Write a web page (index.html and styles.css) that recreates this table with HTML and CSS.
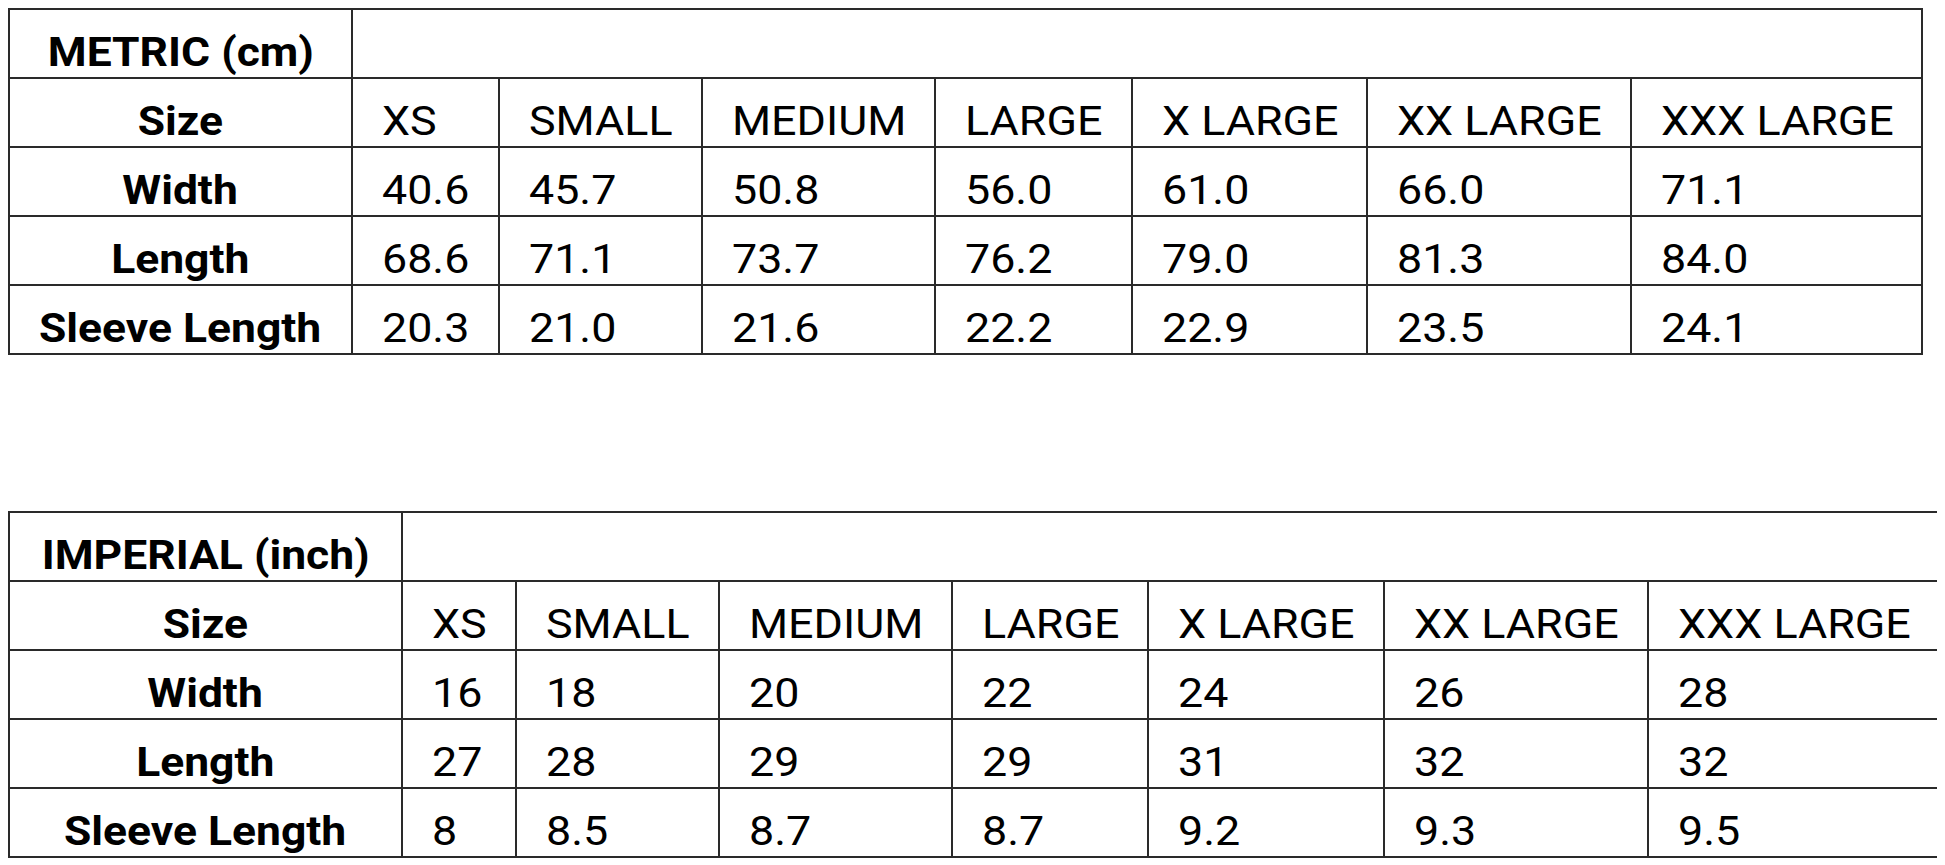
FILE: index.html
```html
<!DOCTYPE html>
<html>
<head>
<meta charset="utf-8">
<link rel="stylesheet" href="styles.css">
</head>
<body>
<table class="chart metric">
  <colgroup>
    <col class="c1"><col class="c2"><col class="c3"><col class="c4"><col class="c5"><col class="c6"><col class="c7"><col class="c8">
  </colgroup>
  <tr><th class="label"><span>METRIC (cm)</span></th><td colspan="7"></td></tr>
  <tr><th class="label"><span>Size</span></th><td><span>XS</span></td><td><span>SMALL</span></td><td><span>MEDIUM</span></td><td><span>LARGE</span></td><td><span>X LARGE</span></td><td><span>XX LARGE</span></td><td><span>XXX LARGE</span></td></tr>
  <tr><th class="label"><span>Width</span></th><td><span>40.6</span></td><td><span>45.7</span></td><td><span>50.8</span></td><td><span>56.0</span></td><td><span>61.0</span></td><td><span>66.0</span></td><td><span>71.1</span></td></tr>
  <tr><th class="label"><span>Length</span></th><td><span>68.6</span></td><td><span>71.1</span></td><td><span>73.7</span></td><td><span>76.2</span></td><td><span>79.0</span></td><td><span>81.3</span></td><td><span>84.0</span></td></tr>
  <tr><th class="label"><span>Sleeve Length</span></th><td><span>20.3</span></td><td><span>21.0</span></td><td><span>21.6</span></td><td><span>22.2</span></td><td><span>22.9</span></td><td><span>23.5</span></td><td><span>24.1</span></td></tr>
</table>

<table class="chart imperial">
  <colgroup>
    <col class="c1"><col class="c2"><col class="c3"><col class="c4"><col class="c5"><col class="c6"><col class="c7"><col class="c8">
  </colgroup>
  <tr><th class="label"><span>IMPERIAL (inch)</span></th><td colspan="7"></td></tr>
  <tr><th class="label"><span>Size</span></th><td><span>XS</span></td><td><span>SMALL</span></td><td><span>MEDIUM</span></td><td><span>LARGE</span></td><td><span>X LARGE</span></td><td><span>XX LARGE</span></td><td><span>XXX LARGE</span></td></tr>
  <tr><th class="label"><span>Width</span></th><td><span>16</span></td><td><span>18</span></td><td><span>20</span></td><td><span>22</span></td><td><span>24</span></td><td><span>26</span></td><td><span>28</span></td></tr>
  <tr><th class="label"><span>Length</span></th><td><span>27</span></td><td><span>28</span></td><td><span>29</span></td><td><span>29</span></td><td><span>31</span></td><td><span>32</span></td><td><span>32</span></td></tr>
  <tr><th class="label"><span>Sleeve Length</span></th><td><span>8</span></td><td><span>8.5</span></td><td><span>8.7</span></td><td><span>8.7</span></td><td><span>9.2</span></td><td><span>9.3</span></td><td><span>9.5</span></td></tr>
</table>
</body>
</html>
```

FILE: styles.css
```css
html, body {
  background: #ffffff;
}
body {
  margin: 8px;
  font-family: Roboto, "Liberation Sans", sans-serif;
  color: #000;
}
.chart {
  border-collapse: collapse;
  table-layout: fixed;
  border: 2px solid #111;
}
.chart th, .chart td {
  border: 2px solid #2a2a2a;
  padding: 19px 0 1px 29px;
  line-height: 47px;
  font-size: 40px;
  font-weight: 400;
  text-align: left;
  vertical-align: top;
  white-space: nowrap;
}
.chart td span {
  display: inline-block;
  transform: scaleX(1.12);
  transform-origin: left center;
}
.chart th.label {
  font-weight: 700;
  text-align: center;
  padding-left: 0;
}
.chart th.label span {
  display: inline-block;
  transform: scaleX(1.11);
  transform-origin: center center;
}
.metric { width: 1913px; }
.metric .c1 { width: 343px; }
.metric .c2 { width: 147px; }
.metric .c3 { width: 203px; }
.metric .c4 { width: 233px; }
.metric .c5 { width: 197px; }
.metric .c6 { width: 235px; }
.metric .c7 { width: 264px; }
.metric .c8 { width: 291px; }

.imperial { width: 1930px; margin-top: 156px; }
.imperial .c1 { width: 393px; }
.imperial .c2 { width: 114px; }
.imperial .c3 { width: 203px; }
.imperial .c4 { width: 233px; }
.imperial .c5 { width: 196px; }
.imperial .c6 { width: 236px; }
.imperial .c7 { width: 264px; }
.imperial .c8 { width: 291px; }
```
